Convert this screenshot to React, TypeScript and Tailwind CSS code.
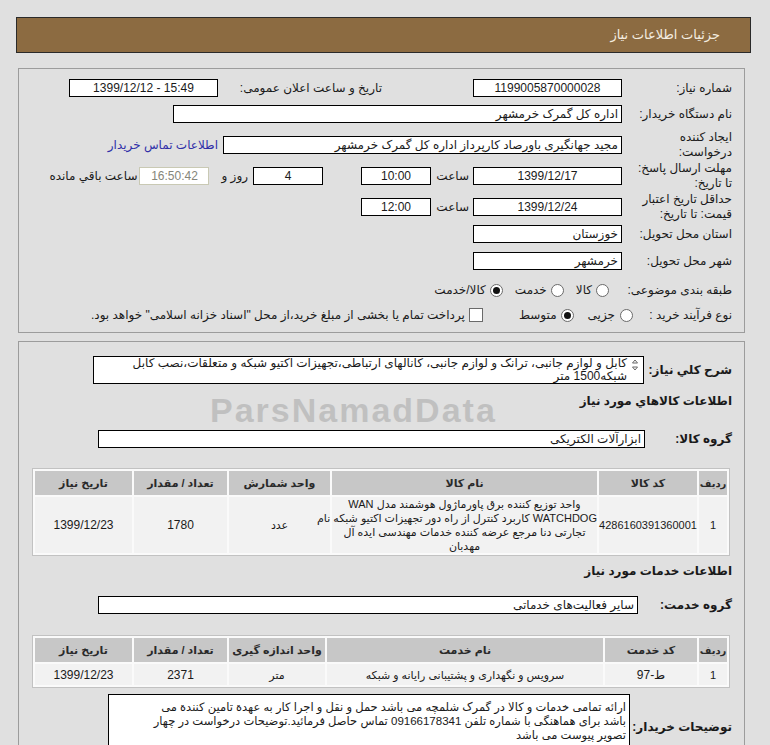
import React from "react";

type Kids = { className?: string; children?: React.ReactNode };

function Box({ className = "", children, ltr }: Kids & { ltr?: boolean }) {
    return (
        <div
            dir={ltr ? "ltr" : undefined}
            className={"h-[18px] shrink-0 overflow-hidden whitespace-nowrap border bg-white px-[3px] text-[12px] leading-[16px] " + className}>
            {children}
        </div>
    );
}

function Label({ className = "", children }: Kids) {
    return <div className={"shrink-0 whitespace-nowrap text-[12px] leading-[15px] " + className}>{children}</div>;
}

function Radio({ checked, className = "" }: { checked?: boolean; className?: string }) {
    return (
        <span
            className={"flex h-[13px] w-[13px] shrink-0 items-center justify-center rounded-full border border-[#6a6a6a] bg-white " + className}>
            {checked && <span className="h-[7px] w-[7px] rounded-full bg-[#111]" />}
        </span>
    );
}

type Col = { title: string; w: string };

function DataTable({ cols, row, rowH }: { cols: Col[]; row: React.ReactNode[]; rowH: string }) {
    return (
        <table className="mr-[2px] w-[698px] table-fixed border-separate border-spacing-[2px] border border-[#c2c2c2] bg-[#fafafa]">
            <thead>
                <tr>
                    {cols.map((c) => (
                        <th key={c.title} className={"h-[24px] whitespace-nowrap bg-[#c7c7c7] px-0 text-center font-bold text-[#2a2a2a] " + c.w}>
                            {c.title}
                        </th>
                    ))}
                </tr>
            </thead>
            <tbody>
                <tr>
                    {row.map((cell, i) => (
                        <td key={i} className={"whitespace-nowrap bg-[#f2f2f2] px-0 text-center text-[11px] leading-[14px] text-[#1a1a1a] " + rowH}>
                            {cell}
                        </td>
                    ))}
                </tr>
            </tbody>
        </table>
    );
}

const goodsCols: Col[] = [
    { title: "ردیف", w: "w-[28px] text-[10px]" },
    { title: "کد کالا", w: "w-[98px] text-[11px]" },
    { title: "نام کالا", w: "w-[265px] text-[11px]" },
    { title: "واحد شمارش", w: "w-[101px] text-[11px]" },
    { title: "تعداد / مقدار", w: "w-[93px] text-[11px]" },
    { title: "تاریخ نیاز", w: "w-[97px] text-[11px]" },
];

const serviceCols: Col[] = [
    { title: "ردیف", w: "w-[28px] text-[10px]" },
    { title: "کد خدمت", w: "w-[92px] text-[11px]" },
    { title: "نام خدمت", w: "w-[276px] text-[11px]" },
    { title: "واحد اندازه گیری", w: "w-[96px] text-[11px]" },
    { title: "تعداد / مقدار", w: "w-[93px] text-[11px]" },
    { title: "تاریخ نیاز", w: "w-[97px] text-[11px]" },
];

export default function App() {
    return (
        <div className="min-h-screen bg-[#e0e0e0] pl-[16px] pt-[17px] font-['Liberation_Sans','DejaVu_Sans',sans-serif] text-[#1a1a1a]">
            <div dir="rtl" className="relative w-[735px]">
                {/* title bar */}
                <div className="flex h-[36px] items-center border border-[#2a2a2a] bg-[#8c6b41] pr-[30px] text-[13px] text-[#f4ede0]">
                    جزئیات اطلاعات نیاز
                </div>

                {/* main info */}
                <section className="mr-[6px] mt-[15px] w-[727px] border border-[#9c9c9c] pb-[6px] pr-[12px] pt-[10px]">
                    <div className="flex h-[18px] items-center">
                        <Label className="w-[110px]">شماره نیاز:</Label>
                        <Box ltr className="w-[149px] border-black text-center">1199005870000028</Box>
                        <Label className="mr-[91px] w-[157px]">تاریخ و ساعت اعلان عمومی:</Label>
                        <Box ltr className="mr-[7px] w-[149px] border-black text-center">1399/12/12 - 15:49</Box>
                    </div>
                    <div className="mt-[8px] flex h-[18px] items-center">
                        <Label className="w-[110px]">نام دستگاه خریدار:</Label>
                        <Box className="w-[449px] border-black">اداره کل گمرک خرمشهر</Box>
                    </div>
                    <div className="mt-[7px] flex h-[30px] items-center">
                        <Label className="w-[110px]">ایجاد کننده<br />درخواست:</Label>
                        <Box className="w-[399px] border-black">مجید جهانگیری باورصاد کارپرداز اداره کل گمرک خرمشهر</Box>
                        <a href="#" className="mr-[5px] whitespace-nowrap text-[12px] text-[#2f2fa8]">اطلاعات تماس خریدار</a>
                    </div>
                    <div className="mt-[1px] flex h-[30px] items-center">
                        <Label className="w-[110px]">مهلت ارسال پاسخ:<br />تا تاریخ:</Label>
                        <Box ltr className="w-[149px] border-black text-center">1399/12/17</Box>
                        <Label className="mr-[4px] w-[34px]">ساعت</Label>
                        <Box ltr className="mr-[4px] w-[70px] border-black text-center">10:00</Box>
                        <Box ltr className="mr-[38px] w-[70px] border-black text-center">4</Box>
                        <Label className="mr-[5px]">روز و</Label>
                        <Box ltr className="mr-[12px] w-[70px] border-[#c9c9b4] bg-[#eeeed3] text-center text-[#85857a]">16:50:42</Box>
                        <Label className="mr-[2px]">ساعت باقي مانده</Label>
                    </div>
                    <div className="mt-[1px] flex h-[30px] items-center">
                        <Label className="w-[110px]">حداقل تاریخ اعتبار<br />قیمت: تا تاریخ:</Label>
                        <Box ltr className="w-[149px] border-black text-center">1399/12/24</Box>
                        <Label className="mr-[4px] w-[34px]">ساعت</Label>
                        <Box ltr className="mr-[4px] w-[70px] border-black text-center">12:00</Box>
                    </div>
                    <div className="mt-[1px] flex h-[22px] items-center">
                        <Label className="w-[110px]">استان محل تحویل:</Label>
                        <Box className="w-[149px] border-black">خوزستان</Box>
                    </div>
                    <div className="mt-[5px] flex h-[22px] items-center">
                        <Label className="w-[110px]">شهر محل تحویل:</Label>
                        <Box className="w-[149px] border-black">خرمشهر</Box>
                    </div>
                    <div className="mt-[7px] flex h-[22px] items-center">
                        <Label className="w-[110px]">طبقه بندی موضوعی:</Label>
                        <Radio className="mr-[13px]" />
                        <Label className="mr-[4px]">کالا</Label>
                        <Radio className="mr-[12px]" />
                        <Label className="mr-[4px]">خدمت</Label>
                        <Radio checked className="mr-[12px]" />
                        <Label className="mr-[4px]">کالا/خدمت</Label>
                    </div>
                    <div className="mt-[3px] flex h-[22px] items-center">
                        <Label className="w-[99px]">نوع فرآیند خرید :</Label>
                        <Radio />
                        <Label className="mr-[5px]">جزیی</Label>
                        <Radio checked className="mr-[14px]" />
                        <Label className="mr-[4px]">متوسط</Label>
                        <span className="mr-[36px] h-[14px] w-[14px] shrink-0 border border-[#6a6a6a] bg-white" />
                        <Label className="mr-[4px]">پرداخت تمام یا بخشی از مبلغ خرید،از محل "اسناد خزانه اسلامی" خواهد بود.</Label>
                    </div>
                </section>

                {/* goods & services */}
                <section className="mr-[6px] mt-[8px] w-[727px] border border-[#9c9c9c] pb-[20px] pr-[12px] pt-[14px]">
                    <div className="flex items-center">
                        <Label className="w-[88px] font-bold">شرح کلي نیاز:</Label>
                        <div className="flex h-[28px] w-[551px] shrink-0 overflow-hidden border border-black bg-white">
                            <svg width="16" height="14" viewBox="0 0 16 14" className="mt-[1px] shrink-0">
                                <path d="M8 2 L10.5 5 H5.5 Z M8 12 L10.5 9 H5.5 Z" fill="none" stroke="#666" strokeWidth="1" />
                            </svg>
                            <div className="whitespace-nowrap text-[12px] leading-[13px]">
                                کابل و لوازم جانبی، ترانک و لوازم جانبی، کانالهای ارتباطی،تجهیزات اکتیو شبکه و متعلقات،نصب کابل
                                <br />
                                شبکه1500 متر
                            </div>
                        </div>
                    </div>

                    <div className="mt-[9px] h-[16px] whitespace-nowrap text-[12px] font-bold leading-[16px]">اطلاعات کالاهاي مورد نیاز</div>

                    <div className="mt-[21px] flex h-[18px] items-center">
                        <Label className="w-[87px] font-bold">گروه کالا:</Label>
                        <Box className="w-[547px] border-black">ابزارآلات الکتریکی</Box>
                    </div>

                    <div className="mt-[20px]">
                        <DataTable
                            cols={goodsCols}
                            rowH="h-[53px]"
                            row={[
                                "1",
                                <span dir="ltr" className="text-[11px]">4286160391360001</span>,
                                <>
                                    واحد توزیع کننده برق پاورماژول هوشمند مدل WAN
                                    <br />
                                    WATCHDOG کاربرد کنترل از راه دور تجهیزات اکتیو شبکه نام
                                    <br />
                                    تجارتی دنا مرجع عرضه کننده خدمات مهندسی ایده آل
                                    <br />
                                    مهدبان
                                </>,
                                "عدد",
                                <span className="text-[12px]">1780</span>,
                                <span dir="ltr" className="text-[12px]">1399/12/23</span>,
                            ]}
                        />
                    </div>

                    <div className="mt-[7px] h-[16px] whitespace-nowrap text-[12px] font-bold leading-[16px]">اطلاعات خدمات مورد نیاز</div>

                    <div className="mt-[17px] flex h-[18px] items-center">
                        <Label className="w-[94px] font-bold">گروه خدمت:</Label>
                        <Box className="w-[540px] border-black">سایر فعالیت‌های خدماتی</Box>
                    </div>

                    <div className="mt-[21px]">
                        <DataTable
                            cols={serviceCols}
                            rowH="h-[21px]"
                            row={[
                                "1",
                                <span className="text-[12px]">ط-97</span>,
                                "سرویس و نگهداری و پشتیبانی رایانه و شبکه",
                                "متر",
                                <span className="text-[12px]">2371</span>,
                                <span dir="ltr" className="text-[12px]">1399/12/23</span>,
                            ]}
                        />
                    </div>

                    <div className="mt-[6px] flex items-start">
                        <Label className="mt-[25px] w-[102px] font-bold leading-[16px]">توضیحات خریدار:</Label>
                        <div className="h-[75px] w-[522px] shrink-0 overflow-hidden whitespace-nowrap border border-black bg-white px-[3px] pt-[5px] text-[11.5px] leading-[14px]">
                            ارائه تمامی خدمات و کالا در گمرک شلمچه می باشد حمل و نقل و اجرا کار به عهدة تامین کنندة می
                            <br />
                            باشد برای هماهنگی با شماره تلفن 09166178341 تماس حاصل فرمائید.توضیحات درخواست در چهار
                            <br />
                            تصویر پیوست می باشد
                        </div>
                    </div>
                </section>

                {/* watermark */}
                <div dir="ltr" className="pointer-events-none absolute left-[194px] top-[374px] whitespace-nowrap text-[34px] font-bold leading-[38px] tracking-[2px] text-[#7a7a7a] opacity-30">
                    ParsNamadData
                </div>
            </div>
        </div>
    );
}
